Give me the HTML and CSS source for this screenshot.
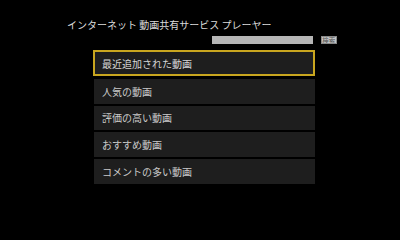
FILE: index.html
```html
<!DOCTYPE html>
<html lang="ja">
<head>
<meta charset="utf-8">
<title>インターネット 動画共有サービス プレーヤー</title>
<link rel="stylesheet" href="styles.css">
</head>
<body>
<div class="page">
  <div class="title">インターネット 動画共有サービス プレーヤー</div>
  <div class="search">
    <div class="search-input"></div>
    <div class="search-btn">検索</div>
  </div>
  <div class="menu">
    <div class="item selected">最近追加された動画</div>
    <div class="item">人気の動画</div>
    <div class="item">評価の高い動画</div>
    <div class="item">おすすめ動画</div>
    <div class="item">コメントの多い動画</div>
  </div>
</div>
</body>
</html>
```
FILE: styles.css
```css
html, body {
  margin: 0;
  padding: 0;
  background: #000;
}
body {
  width: 400px;
  height: 225px;
  overflow: hidden;
  font-family: "Noto Sans CJK JP", "Noto Sans", sans-serif;
}
.page {
  padding-top: 19px;
  display: flex;
  flex-direction: column;
}
.title {
  margin-left: 67px;
  font-size: 10px;
  line-height: 11px;
  height: 11px;
  color: #dcdcdc;
  white-space: nowrap;
}
.search {
  margin-top: 6px;
  height: 8px;
  display: flex;
  justify-content: flex-end;
  align-items: center;
  gap: 7.4px;
  padding-right: 63.3px;
}
.search-input {
  width: 101.3px;
  height: 8px;
  background: #b6b6b6;
}
.search-btn {
  width: 16px;
  height: 8px;
  box-sizing: border-box;
  background: #c4c4c4;
  border: 0.5px solid #8a8a8a;
  color: #555;
  font-size: 6.5px;
  line-height: 7px;
  text-align: center;
  white-space: nowrap;
  overflow: hidden;
}
.menu {
  margin-top: 6px;
  margin-left: 93px;
  width: 222.3px;
  display: flex;
  flex-direction: column;
  gap: 2px;
}
.item {
  box-sizing: border-box;
  margin-left: 1px;
  width: 221px;
  height: 24.67px;
  background: #1e1e1e;
  color: #cacaca;
  font-size: 10px;
  display: flex;
  align-items: center;
  padding-left: 8px;
  white-space: nowrap;
}
.item.selected {
  margin-left: 0;
  width: 222.3px;
  height: 26px;
  margin-bottom: 1px;
  border: 2px solid #c9a61f;
  padding-left: 7px;
  color: #d6d6d6;
}
```
